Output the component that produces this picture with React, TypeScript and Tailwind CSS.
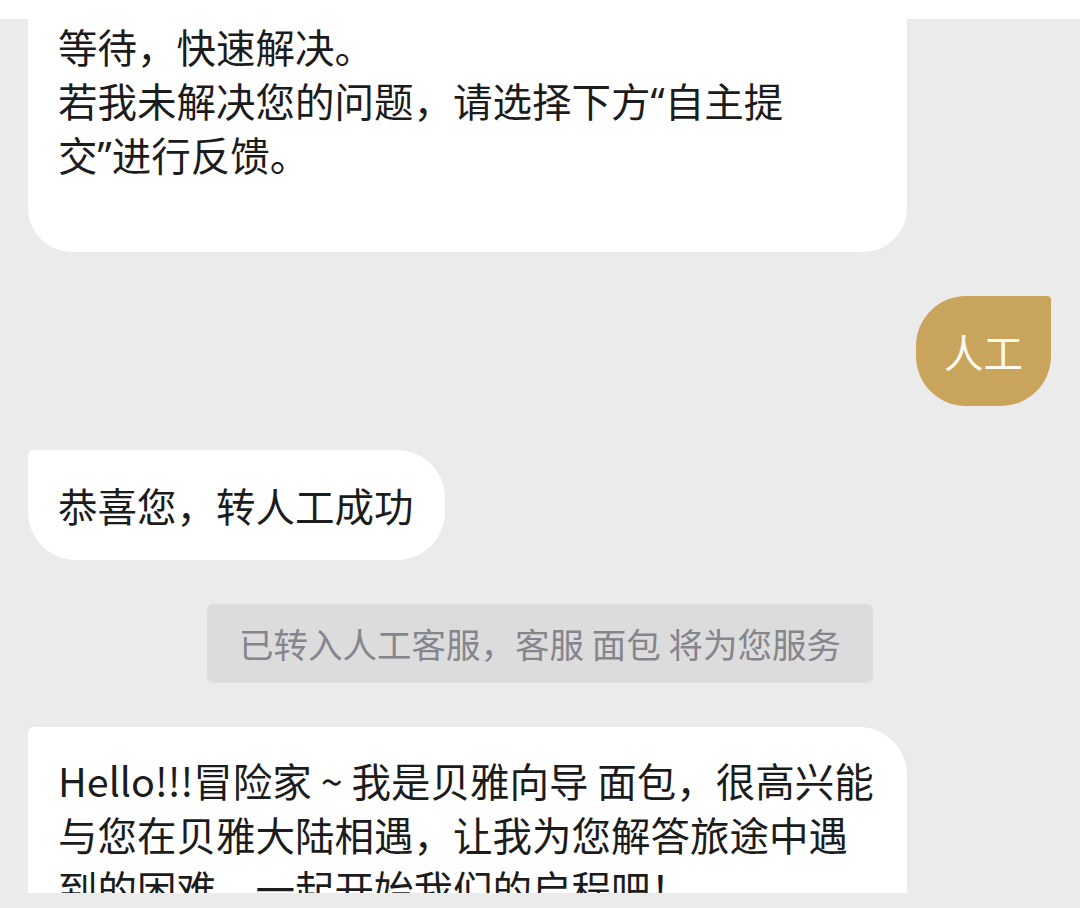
export default function App() {
  const quote = 'font-["Noto_Sans",sans-serif] leading-none'
  return (
    <div
      className="h-[908px] w-full bg-[#ebebeb] flex flex-col overflow-hidden text-[#1c1c1c]"
      style={{ fontFamily: '"Noto Sans CJK SC", "Noto Sans", sans-serif' }}
    >
      {/* tail of the header */}
      <div className="h-[19px] bg-white shrink-0" />

      {/* message list */}
      <div className="flex-1 overflow-hidden flex flex-col gap-[44px]">
        {/* bot reply, scrolled partly out of view */}
        <div className="ml-[28px] w-[879px] bg-white rounded-b-[44px] pl-[30px] pb-[71px] text-[39.5px] leading-[54px]">
          等待，快速解决。
          <br />
          若我未解决您的问题，请选择下方<span className={quote}>“</span>自主提
          <br />
          交<span className={quote}>”</span>进行反馈。
        </div>

        {/* user message */}
        <div className="flex justify-end pr-[29px]">
          <div className="bg-[#c9a45c] text-[#fffaf0] rounded-tl-[50px] rounded-tr-[4px] rounded-b-[50px] px-[28px] py-[28px] text-[39.5px] leading-[54px]">
            人工
          </div>
        </div>

        {/* bot reply */}
        <div className="flex">
          <div className="ml-[28px] bg-white rounded-tl-[6px] rounded-tr-[48px] rounded-b-[48px] pl-[30px] pr-[31px] py-[28px] text-[39.5px] leading-[54px] whitespace-nowrap">
            恭喜您，转人工成功
          </div>
        </div>

        {/* system notice */}
        <div className="flex justify-center">
          <div className="bg-[#dcdcdc] rounded-[6px] px-[32px] py-[12px] text-[34.5px] leading-[55px] text-[#85858e] whitespace-nowrap">
            已转入人工客服，客服 面包 将为您服务
          </div>
        </div>

        {/* welcome message */}
        <div className="ml-[28px] w-[879px] shrink-0 bg-white rounded-tl-[6px] rounded-tr-[48px] rounded-b-[48px] pl-[30px] pt-[26px] pb-[40px] text-[39.5px] leading-[54px]">
          Hello!!!冒险家 ~ 我是贝雅向导 面包，很高兴能
          <br />
          与您在贝雅大陆相遇，让我为您解答旅途中遇
          <br />
          到的困难，一起开始我们的启程吧！
        </div>
      </div>

      <div className="h-[15px] shrink-0" />
    </div>
  )
}
